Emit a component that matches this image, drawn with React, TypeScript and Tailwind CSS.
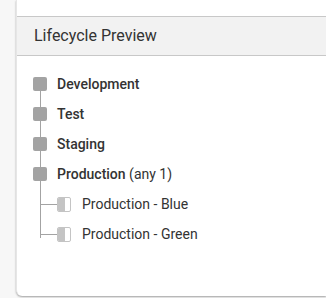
import React from "react"

type Stage = { name: string; note?: string; children?: string[] }

const stages: Stage[] = [
  { name: "Development" },
  { name: "Test" },
  { name: "Staging" },
  { name: "Production", note: "(any 1)", children: ["Production - Blue", "Production - Green"] },
]

function Square() {
  return <div className="w-[14px] h-[14px] rounded-[2px] bg-[#a3a3a3] shrink-0" />
}

function HalfSquare() {
  return (
    <div className="w-[14px] h-[15px] rounded-[2px] border border-[#c4c4c4] bg-white flex shrink-0 overflow-hidden">
      <div className="w-[7px] h-full bg-[#c4c4c4]" />
    </div>
  )
}

export default function App() {
  return (
    <div
      className="w-[326px] h-[298px] bg-[#f7f7f7] pl-[16px] overflow-hidden"
      style={{ fontFamily: "Roboto, 'Liberation Sans', sans-serif" }}
    >
      <div className="h-[296px] bg-white rounded-bl-[6px] border-l border-[#e6e6e6] shadow-[0_1px_2px_rgba(0,0,0,0.35)] pt-[16px]">
        <div className="h-[40px] bg-[#f2f2f2] border-y border-[#c8c8c8] flex items-center pl-[17px] text-[16px] text-[#333]">
          Lifecycle Preview
        </div>
        <div className="pl-[16px] pt-[13px] relative">
          <div className="absolute left-[23px] top-[28px] w-px h-[154px] bg-[#a3a3a3]" />
          {stages.map((s) => (
            <div key={s.name}>
              <div className="h-[30px] flex items-center gap-[10px] relative">
                <Square />
                <span className="text-[14px] font-medium text-[#333]">
                  {s.name}
                  {s.note && <span className="font-normal"> {s.note}</span>}
                </span>
              </div>
              {s.children?.map((c) => (
                <div key={c} className="h-[30px] flex items-center relative pl-[7px]">
                  <div className="w-[17px] h-px bg-[#a3a3a3]" />
                  <HalfSquare />
                  <span className="ml-[11px] text-[14px] text-[#333]">{c}</span>
                </div>
              ))}
            </div>
          ))}
        </div>
      </div>
    </div>
  )
}
